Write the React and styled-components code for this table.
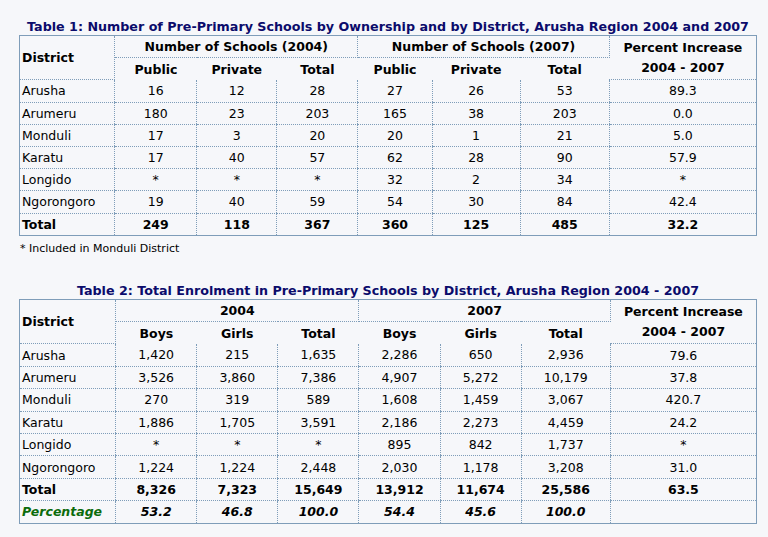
import styled, { createGlobalStyle } from 'styled-components';

const GlobalStyle = createGlobalStyle`
  html, body {
    margin: 0;
    background: #f6f7fa;
  }
  body {
    font-family: "DejaVu Sans", Verdana, sans-serif;
    font-size: 12.5px;
    color: #000;
  }
`;

const Page = styled.div`
  padding: 17px 0 14px 19px;
  width: 738px;
`;

const Table = styled.table`
  width: 738px;
  table-layout: fixed;
  border-collapse: collapse;
  border: 1px solid #7f9db9;
`;

const Caption = styled.caption`
  font-weight: bold;
  font-size: 12.7px;
  color: #0b0b6b;
  line-height: 15px;
  padding: 2px 0 1px;
  white-space: nowrap;
`;

const Row = styled.tr`
  height: ${p => p.$h}px;
`;

const HeadCell = styled.th`
  font-weight: bold;
  padding: 0 2px;
  text-align: ${p => (p.$left ? 'left' : 'center')};
  line-height: ${p => (p.$lines ? '20px' : 'normal')};
  border-bottom: ${p => (p.$bottom ? '1px dotted #7f9db9' : 'none')};
  border-left: ${p => (p.$sides ? '1px dotted #7f9db9' : 'none')};
  border-right: ${p => (p.$sides || p.$right ? '1px dotted #7f9db9' : 'none')};
`;

const Cell = styled.td`
  padding: 0 2px;
  text-align: ${p => (p.$left ? 'left' : 'center')};
  font-weight: ${p => (p.$strong ? 'bold' : 'normal')};
  font-style: ${p => (p.$italic ? 'italic' : 'normal')};
  color: ${p => (p.$green ? '#0b6b0b' : '#000')};
  border-left: 1px dotted #7f9db9;
  border-bottom: 1px dotted #7f9db9;
  white-space: nowrap;
`;

const Note = styled.div`
  font-size: 11px;
  line-height: 14px;
  padding: 6px 0 0 1px;
  height: 39px;
`;

const table1 = {
  title: 'Table 1: Number of Pre-Primary Schools by Ownership and by District, Arusha Region 2004 and 2007',
  groups: ['Number of Schools (2004)', 'Number of Schools (2007)'],
  subs: ['Public', 'Private', 'Total'],
  cols: [95, 82, 80, 81, 74, 88, 89, 147],
  rowH: 22.2,
  rows: [
    ['Arusha', '16', '12', '28', '27', '26', '53', '89.3'],
    ['Arumeru', '180', '23', '203', '165', '38', '203', '0.0'],
    ['Monduli', '17', '3', '20', '20', '1', '21', '5.0'],
    ['Karatu', '17', '40', '57', '62', '28', '90', '57.9'],
    ['Longido', '*', '*', '*', '32', '2', '34', '*'],
    ['Ngorongoro', '19', '40', '59', '54', '30', '84', '42.4'],
  ],
  total: ['Total', '249', '118', '367', '360', '125', '485', '32.2'],
};

const table2 = {
  title: 'Table 2: Total Enrolment in Pre-Primary Schools by District, Arusha Region 2004 - 2007',
  groups: ['2004', '2007'],
  subs: ['Boys', 'Girls', 'Total'],
  cols: [96, 81, 81, 81, 81, 81, 89, 146],
  rowH: 22.4,
  rows: [
    ['Arusha', '1,420', '215', '1,635', '2,286', '650', '2,936', '79.6'],
    ['Arumeru', '3,526', '3,860', '7,386', '4,907', '5,272', '10,179', '37.8'],
    ['Monduli', '270', '319', '589', '1,608', '1,459', '3,067', '420.7'],
    ['Karatu', '1,886', '1,705', '3,591', '2,186', '2,273', '4,459', '24.2'],
    ['Longido', '*', '*', '*', '895', '842', '1,737', '*'],
    ['Ngorongoro', '1,224', '1,224', '2,448', '2,030', '1,178', '3,208', '31.0'],
  ],
  total: ['Total', '8,326', '7,323', '15,649', '13,912', '11,674', '25,586', '63.5'],
  percentage: ['Percentage', '53.2', '46.8', '100.0', '54.4', '45.6', '100.0', ''],
};

function DataTable({ data }) {
  const { title, groups, subs, cols, rowH, rows, total, percentage } = data;
  return (
    <Table>
      <Caption>{title}</Caption>
      <colgroup>
        {cols.map((w, i) => <col key={i} style={{ width: w }} />)}
      </colgroup>
      <thead>
        <Row $h={rowH}>
          <HeadCell rowSpan={2} $left $bottom $right>District</HeadCell>
          {groups.map(g => (
            <HeadCell key={g} colSpan={3} $sides $bottom>{g}</HeadCell>
          ))}
          <HeadCell rowSpan={2} $bottom $lines>Percent Increase<br />2004 - 2007</HeadCell>
        </Row>
        <Row $h={rowH}>
          {[...subs, ...subs].map((s, i) => <HeadCell key={i}>{s}</HeadCell>)}
        </Row>
      </thead>
      <tbody>
        {rows.map(r => (
          <Row key={r[0]} $h={rowH}>
            {r.map((v, i) => <Cell key={i} $left={i === 0}>{v}</Cell>)}
          </Row>
        ))}
        <Row $h={rowH}>
          {total.map((v, i) => <Cell key={i} $left={i === 0} $strong>{v}</Cell>)}
        </Row>
        {percentage && (
          <Row $h={rowH}>
            {percentage.map((v, i) => (
              <Cell key={i} $left={i === 0} $strong $italic $green={i === 0}>{v}</Cell>
            ))}
          </Row>
        )}
      </tbody>
    </Table>
  );
}

export default function App() {
  return (
    <Page>
      <GlobalStyle />
      <DataTable data={table1} />
      <Note>* Included in Monduli District</Note>
      <DataTable data={table2} />
    </Page>
  );
}
